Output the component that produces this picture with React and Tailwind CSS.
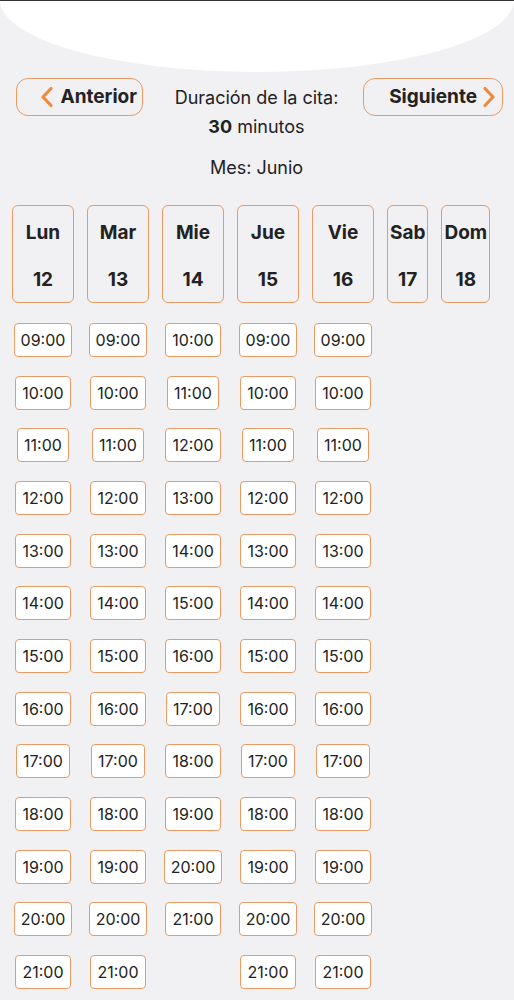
import React from "react";

const hours = (from) =>
  Array.from({ length: 22 - from }, (_, i) => `${String(from + i).padStart(2, "0")}:00`);

const days = [
  { name: "Lun", num: 12, slots: hours(9) },
  { name: "Mar", num: 13, slots: hours(9) },
  { name: "Mie", num: 14, slots: hours(10) },
  { name: "Jue", num: 15, slots: hours(9) },
  { name: "Vie", num: 16, slots: hours(9) },
  { name: "Sab", num: 17, slots: [], weekend: true },
  { name: "Dom", num: 18, slots: [], weekend: true },
];

function ChevronLeft() {
  return (
    <svg width="14" height="22" viewBox="0 0 14 22" fill="none">
      <path d="M11 2.5 3 11l8 8.5" stroke="#ec8b3d" strokeWidth="3.2" strokeLinecap="round" strokeLinejoin="round" />
    </svg>
  );
}

function ChevronRight() {
  return (
    <svg width="14" height="22" viewBox="0 0 14 22" fill="none">
      <path d="M3 2.5 11 11l-8 8.5" stroke="#ec8b3d" strokeWidth="3.2" strokeLinecap="round" strokeLinejoin="round" />
    </svg>
  );
}

export default function App() {
  return (
    <div
      className="min-h-[1000px] w-[514px] overflow-hidden bg-[#f1f0f3] text-[#222222]"
      style={{ fontFamily: "Inter, 'Noto Sans', sans-serif" }}
    >
      {/* top curved sheet */}
      <div className="h-[72px] w-full rounded-b-[50%_100%] border-t border-[#333333] bg-white" />

      {/* nav row */}
      <div className="mt-[6px] flex items-start justify-between pl-[16px] pr-[11px]">
        <button className="flex h-[38px] w-[127px] items-center justify-end gap-[6px] rounded-[12px] border border-[#e99b63] pr-[5px]">
          <ChevronLeft />
          <span className="text-[19px] font-bold">Anterior</span>
        </button>

        <div className="pl-[7px] pt-[5px] text-center text-[18px] leading-[29px]">
          <div>Duración de la cita:</div>
          <div>
            <span className="font-bold">30</span> minutos
          </div>
          <div className="mt-[12px]">Mes: Junio</div>
        </div>

        <button className="flex h-[38px] w-[140px] items-center justify-end gap-[5px] rounded-[12px] border border-[#e99b63] pr-[6px]">
          <span className="text-[19px] font-bold">Siguiente</span>
          <ChevronRight />
        </button>
      </div>

      {/* calendar */}
      <div className="mt-[23px] flex items-start gap-[13px] pl-[12px]">
        {days.map((d) => (
          <div key={d.name} className={`flex flex-col items-center ${d.weekend ? "" : "w-[62px]"}`}>
            <div
              className={`flex h-[98px] flex-col items-center rounded-[6px] border border-[#e99b63] pt-[14px] text-[19px] font-bold ${
                d.weekend ? "px-[2px]" : "w-full"
              }`}
            >
              <span className="leading-[26px]">{d.name}</span>
              <span className="mt-[21px] leading-[26px]">{d.num}</span>
            </div>
            <div className="mt-[20px] flex flex-col items-center gap-[18.67px]">
              {d.slots.map((s) => (
                <div
                  key={s}
                  className="flex h-[34px] items-center rounded-[4px] border border-[#e99b63] bg-white px-[6px] text-[16px]"
                >
                  {s}
                </div>
              ))}
            </div>
          </div>
        ))}
      </div>
    </div>
  );
}
